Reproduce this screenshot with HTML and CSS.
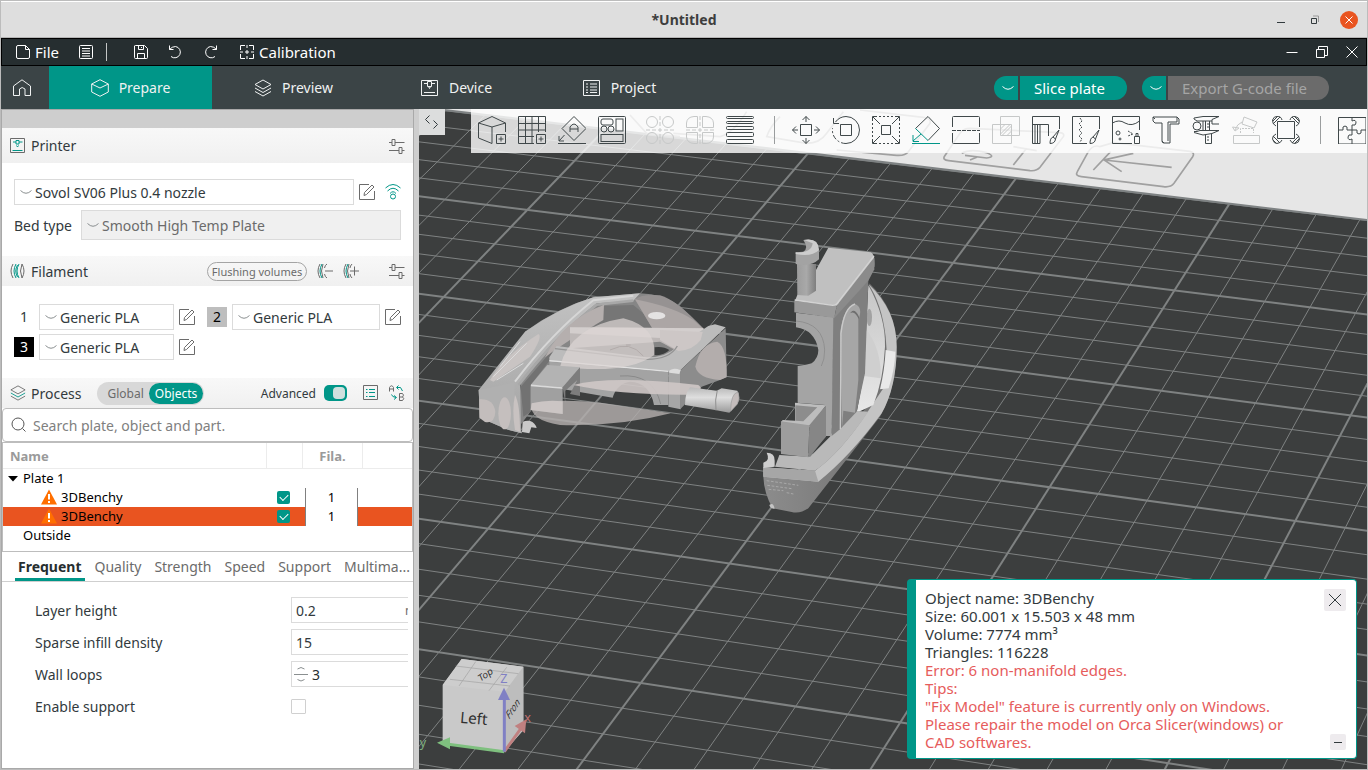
FILE: index.html
```html
<!DOCTYPE html>
<html lang="en">
<head>
    <meta charset="UTF-8">
    <title>*Untitled</title>
    <link rel="stylesheet" href="styles.css">
</head>
<body>
    <!-- shared icons -->
    <svg class="defs" width="0" height="0" aria-hidden="true">
        <symbol id="chevron" viewBox="0 0 12 12"><path d="M0.500 4.500Q6 10 11.500 4.500"/></symbol>
        <symbol id="edit" viewBox="0 0 16 16"><path d="M10 0.500H0.500V15.500H15.500V7M5 11.500L5.500 8.500L13 1L15 3L7.500 10.500Z"/></symbol>
        <symbol id="sliders" viewBox="0 0 16 16"><path d="M0 4.500H3M6 4.500H15.500M3 1.500H6V7.500H3ZM0 12.500H10M13 12.500H15.500M10 9.500H13V15.500H10Z"/></symbol>
        <symbol id="layers" viewBox="0 0 18 18"><path d="M9 1L17 5.500L9 10L1 5.500ZM1 9L9 13.500L17 9M1 12.500L9 17L17 12.500"/></symbol>
        <symbol id="warn" viewBox="0 0 16 16"><path d="M8 0.500L16 15.500H0Z" fill="#ff6f00" stroke="none"/><path d="M8 5V10.500M8 12V14" stroke="#fff" stroke-width="2"/></symbol>
    </svg>

    <div class="window">
        <header class="titlebar">
            <h1>*Untitled</h1>
            <div class="win-buttons">
                <button class="win-min" aria-label="Minimize"><svg width="10" height="10"><path d="M1 7.500H9"/></svg></button>
                <button aria-label="Restore"><svg width="10" height="10"><path d="M1.500 3.500H6.500V8.500H1.500Z"/><path d="M3 1H8.500V7" stroke="#999"/></svg></button>
                <button class="win-close" aria-label="Close"><svg width="10" height="10"><path d="M1.500 1.500L8.500 8.500M8.500 1.500L1.500 8.500"/></svg></button>
            </div>
        </header>

        <div class="menubar">
            <button class="menu-file"><svg width="14" height="14"><path d="M9.500 0.500H2Q0.500 0.500 0.500 2V12Q0.500 13.500 2 13.500H12Q13.500 13.500 13.500 12V4.500L9.500 0.500V4.500H13.500"/></svg>File</button>
            <button aria-label="Menu"><svg width="14" height="14"><path d="M0.500 1.500Q0.500 0.500 1.500 0.500H12.500Q13.500 0.500 13.500 1.500V12.500Q13.500 13.500 12.500 13.500H1.500Q0.500 13.500 0.500 12.500ZM3 3.500H11M3 6H11M3 8.500H11M3 11H11"/></svg></button>
            <span class="menu-line"></span>
            <button class="menu-save" aria-label="Save"><svg width="14" height="14"><path d="M0.500 1Q0.500 0.500 1.500 0.500H10.500L13.500 3.500V12.500Q13.500 13.500 12.500 13.500H1.500Q0.500 13.500 0.500 12.500ZM4.500 0.500V4.500H9.500V0.500M3.500 13.500V8.500H10.500V13.500M7.500 2V3"/></svg></button>
            <button class="menu-undo" aria-label="Undo"><svg width="14" height="14"><path d="M1.500 0.500V4.500H5.500M1.500 4.500Q4 1.500 7.500 1.500A5.700 5.700 0 1 1 3 11.500"/></svg></button>
            <button class="menu-redo" aria-label="Redo"><svg width="14" height="14"><path d="M12.500 0.500V4.500H8.500M12.500 4.500Q10 1.500 6.500 1.500A5.700 5.700 0 1 0 11 11.500"/></svg></button>
            <button class="menu-calib"><svg width="14" height="14"><path d="M0.500 5V0.500H5M9 0.500H13.500V5M13.500 9V13.500H9M5 13.500H0.500V9M7 0V3M7 11V14M0 7H3M11 7H14M7 5V9M5 7H9"/></svg>Calibration</button>
            <div class="menu-right">
                <button aria-label="Minimize"><svg width="12" height="12"><path d="M0.500 6.500H11.500"/></svg></button>
                <button aria-label="Restore"><svg width="12" height="12"><path d="M0.500 3.500H8.500V11.500H0.500ZM2.500 3V0.500H11.500V9.500H9"/></svg></button>
                <button aria-label="Close"><svg width="12" height="12"><path d="M0.500 0.500L11.500 11.500M11.500 0.500L0.500 11.500"/></svg></button>
            </div>
        </div>

        <nav class="tabbar">
            <a class="home" href="#" aria-label="Home"><svg width="18" height="18"><path d="M0.500 7L9 0.800L17.500 7V16.500H12V10Q9 7 6.500 10V16.500H0.500Z"/></svg></a>
            <a class="tab active" href="#"><svg width="18" height="18"><path d="M9 0.700L17.300 5V13L9 17.300L0.700 13V5ZM0.700 5L9 9L17.300 5"/></svg>Prepare</a>
            <a class="tab" href="#"><svg width="18" height="18"><use href="#layers"/></svg>Preview</a>
            <a class="tab" href="#"><svg width="18" height="18"><path d="M0.500 1.500H16.500V16.500H0.500ZM3 4.500H6.500M10.500 4.500H14M6.500 2.500H10.500V7.500H6.500ZM7.500 7.500L8.500 9.500L9.500 7.500M3 13.500H14"/></svg>Device</a>
            <a class="tab" href="#"><svg width="18" height="18"><path d="M0.500 1.500H16.500V16.500H0.500ZM3 5H5M7 5H14M3 8H5M7 8H14M3 11H5M7 11H14M3 13.500H5M7 13.500H14"/></svg>Project</a>
            <div class="slice-actions">
                <div class="split">
                    <button class="drop" aria-label="Slice options"><svg width="12" height="12"><use href="#chevron"/></svg></button>
                    <button class="main">Slice plate</button>
                </div>
                <div class="split">
                    <button class="drop" aria-label="Export options"><svg width="12" height="12"><use href="#chevron"/></svg></button>
                    <button class="main export" disabled>Export G-code file</button>
                </div>
            </div>
        </nav>

        <div class="workspace">
            <aside class="sidebar">
                <div class="strip"></div>
                <div class="section-head printer-head">
                    <svg width="16" height="16"><path d="M0.500 0.500H14.500V14.500H0.500Z"/><path class="teal" d="M3 4H6M9 4H12.500M6 2.500H9V6H6ZM6.500 7.500L7.500 9L8.500 7.500M2.500 12.500H12.500"/></svg>
                    <h2>Printer</h2>
                    <button class="push" aria-label="Printer settings"><svg width="16" height="16"><use href="#sliders"/></svg></button>
                </div>
                <div class="printer-body">
                    <div class="line">
                        <div class="combo"><svg width="12" height="12"><use href="#chevron"/></svg>
                            <select aria-label="Printer"><option>Sovol SV06 Plus 0.4 nozzle</option></select></div>
                        <button aria-label="Edit printer"><svg width="16" height="16"><use href="#edit"/></svg></button>
                        <button class="wifi" aria-label="Connection"><svg width="16" height="16"><path class="teal" d="M0.500 4Q8 -3 15.500 4M2.500 7Q8 1.500 13.500 7M5 9.500Q8 6 11 9.500"/><circle class="teal" cx="8" cy="12.500" r="2.500"/></svg></button>
                    </div>
                    <div class="line">
                        <label for="bed">Bed type</label>
                        <div class="combo off"><svg width="12" height="12"><use href="#chevron"/></svg>
                            <select id="bed" disabled><option>Smooth High Temp Plate</option></select></div>
                    </div>
                </div>

                <div class="section-head">
                    <svg width="16" height="16"><path d="M3 1Q-1 8 3 15M12 1Q9 8 12 15Q16 8 12 1"/><path class="teal" d="M6 1Q2 8 6 15M9 1Q5 8 9 15M7.500 2Q4 8 7.500 14"/></svg>
                    <h2>Filament</h2>
                    <button class="flush push">Flushing volumes</button>
                    <button aria-label="Remove filament"><svg width="16" height="16"><path d="M3 1Q-1 8 3 15M6 1Q3 8 6 15M10 1Q8 2 7.500 5M10 15Q8 14 7.500 11M8 8H16"/><path class="teal" d="M5 1Q1 8 5 15"/></svg></button>
                    <button class="fil-add" aria-label="Add filament"><svg width="16" height="16"><path d="M3 1Q-1 8 3 15M6 1Q3 8 6 15M9 1Q7 3 7 5M9 15Q7 13 7 11M7 8H16M11.500 3.500V12.500"/><path class="teal" d="M5 1Q1 8 5 15"/></svg></button>
                    <button class="fil-set" aria-label="Filament settings"><svg width="16" height="16"><use href="#sliders"/></svg></button>
                </div>
                <div class="filaments">
                    <div class="fil">
                        <span class="chip">1</span>
                        <div class="combo"><svg width="12" height="12"><use href="#chevron"/></svg>
                            <select aria-label="Filament 1"><option>Generic PLA</option></select></div>
                        <button aria-label="Edit filament 1"><svg width="16" height="16"><use href="#edit"/></svg></button>
                    </div>
                    <div class="fil">
                        <span class="chip grey">2</span>
                        <div class="combo"><svg width="12" height="12"><use href="#chevron"/></svg>
                            <select aria-label="Filament 2"><option>Generic PLA</option></select></div>
                        <button aria-label="Edit filament 2"><svg width="16" height="16"><use href="#edit"/></svg></button>
                    </div>
                    <div class="fil">
                        <span class="chip black">3</span>
                        <div class="combo"><svg width="12" height="12"><use href="#chevron"/></svg>
                            <select aria-label="Filament 3"><option>Generic PLA</option></select></div>
                        <button aria-label="Edit filament 3"><svg width="16" height="16"><use href="#edit"/></svg></button>
                    </div>
                </div>

                <div class="section-head">
                    <svg width="16" height="16" viewBox="0 0 18 18"><path d="M9 1L17 5.500L9 10L1 5.500ZM1 12.500L9 17L17 12.500"/><path class="teal" d="M1 9L9 13.500L17 9"/></svg>
                    <h2>Process</h2>
                    <div class="scope">
                        <button>Global</button>
                        <button class="on">Objects</button>
                    </div>
                    <label class="adv push" for="adv">Advanced</label>
                    <input class="toggle" id="adv" type="checkbox" checked>
                    <button class="list-btn" aria-label="Compare presets"><svg width="16" height="16"><path d="M0.500 0.500H14.500V14.500H0.500Z"/><path class="teal" d="M3 4.500H4.500M6 4.500H12M3 7.500H4.500M6 7.500H12M3 11.500H4.500M6 11.500H12"/></svg></button>
                    <button class="ab-btn" aria-label="Search and replace"><svg width="16" height="16"><path d="M0.500 6.500V2.500Q2.500 -1 4.500 2.500V6.500M0.500 4H4.500M10.500 8.500V15.500H13.500Q16 13.500 13.500 12H10.500M13.500 12Q15.500 10 13.500 8.500H10.500"/><path class="teal" d="M9.500 0.500L7.500 2.500L9.500 4.500M8 2.500H11.500L13.500 6M2.500 9.500Q3 12 7 12.500M5 10.500L7.500 12.500L5 14.500"/></svg></button>
                </div>

                <label class="search">
                    <svg width="16" height="16"><circle cx="7" cy="7" r="6"/><path d="M11.500 11.500L14.500 14.500"/></svg>
                    <input type="text" placeholder="Search plate, object and part." aria-label="Search">
                </label>

                <div class="tree">
                    <table>
                        <colgroup><col class="c-name"><col class="c-check"><col class="c-fila"><col></colgroup>
                        <thead>
                            <tr><th>Name</th><th></th><th>Fila.</th><th></th></tr>
                        </thead>
                        <tbody>
                            <tr><td class="plate"><svg width="10" height="6"><path d="M0 0H10L5 5.500Z"/></svg>Plate 1</td><td></td><td></td><td></td></tr>
                            <tr class="obj">
                                <td><svg width="16" height="16"><use href="#warn"/></svg>3DBenchy</td>
                                <td><input type="checkbox" checked aria-label="Printable"></td>
                                <td class="fila"><span>1</span></td><td></td>
                            </tr>
                            <tr class="obj selected">
                                <td><svg width="16" height="16"><use href="#warn"/></svg>3DBenchy</td>
                                <td><input type="checkbox" checked aria-label="Printable"></td>
                                <td class="fila"><span>1</span></td><td></td>
                            </tr>
                            <tr><td class="outside">Outside</td><td></td><td></td><td></td></tr>
                        </tbody>
                    </table>
                </div>

                <div class="param-tabs">
                    <button class="on">Frequent</button>
                    <button>Quality</button>
                    <button>Strength</button>
                    <button>Speed</button>
                    <button>Support</button>
                    <button>Multima...</button>
                </div>
                <div class="params">
                    <div class="param">
                        <label for="lh">Layer height</label>
                        <div class="field"><input id="lh" type="text" value="0.2"><span class="unit">mm</span></div>
                    </div>
                    <div class="param">
                        <label for="inf">Sparse infill density</label>
                        <div class="field"><input id="inf" type="text" value="15"></div>
                    </div>
                    <div class="param">
                        <label for="wl">Wall loops</label>
                        <div class="field spin">
                            <svg width="14" height="18"><path d="M3.500 4Q7 1 10.500 4M0 9.500H14M3.500 14.500Q7 17.500 10.500 14.500"/></svg>
                            <input id="wl" type="text" value="3"></div>
                    </div>
                    <div class="param">
                        <label for="sup">Enable support</label>
                        <input class="box" id="sup" type="checkbox">
                    </div>
                </div>
            </aside>

            <main class="canvas">
                <svg class="scene" viewBox="419 109 948 660" preserveAspectRatio="xMinYMin slice">
                    <defs>
                        <linearGradient id="g-hull" x1="0" y1="0" x2="0" y2="1"><stop offset="0" stop-color="#c2c2c2"/><stop offset="1" stop-color="#a4a4a4"/></linearGradient>
                        <linearGradient id="g-tube" x1="0" y1="0" x2="0" y2="1"><stop offset="0" stop-color="#b9b9b9"/><stop offset=".4" stop-color="#dedede"/><stop offset="1" stop-color="#9a9a9a"/></linearGradient>
                        <linearGradient id="g-pipe" x1="0" y1="0" x2="1" y2="0"><stop offset="0" stop-color="#9c9c9c"/><stop offset=".5" stop-color="#a9a9a9"/><stop offset="1" stop-color="#7e7e7e"/></linearGradient>
                        <linearGradient id="g-bow" x1="0" y1="0" x2="1" y2="0"><stop offset="0" stop-color="#8c8c8c"/><stop offset="1" stop-color="#6f6f6f"/></linearGradient>
                        <linearGradient id="g-in" x1="0" y1="0" x2="0" y2="1"><stop offset="0" stop-color="#c6c6c6"/><stop offset="1" stop-color="#e8e8e8"/></linearGradient>
                    </defs>
                    <rect x="419" y="109" width="948" height="660" fill="#3c3e3e"/>
                    <g id="grid"></g>
                    <path d="M436 109L740 145L1367 220V109Z" fill="#e6e6e6"/>
                    <path d="M436 109L740 145L1367 220" stroke="#7e8283" stroke-width="2" fill="none"/>

                    <!-- printed key symbols along the plate edge -->
                    <g class="keys" transform="translate(880 0) scale(.33333)">
                        <path d="M660 440Q640 432 625 455L592 515Q584 528 604 530L850 560Q872 563 882 550L938 470Q946 458 930 454L700 428Z"/>
                        <path d="M672 480L875 502M760 460L672 480L725 515M692 455L640 510"/>
                        <path d="M270 385Q250 385 240 400L194 468Q186 480 206 482L450 512Q470 514 480 502L550 410Q555 400 540 398Z"/>
                        <path d="M245 460Q270 445 320 458Q350 470 320 474L255 466M290 472L270 480M440 445L400 495M400 440L470 452"/>
                        <path d="M-130 450L50 466Q75 468 85 455L150 370Q155 355 130 352L-60 330M-300 350Q-330 380 -340 410L-220 430Q-180 430 -160 400L-110 335M-620 400L-480 410Q-440 400 -400 335M-750 345L-700 400L-600 410"/>
                    </g>

                    <!-- left model -->
                    <g transform="translate(460 270) scale(.33333)">
                        <path d="M195 185Q290 115 400 82L540 70Q610 72 660 108L735 180L700 260L300 300L200 440L170 480Z" fill="#868686"/>
                        <path d="M56 360L195 185Q300 112 400 82L540 70L520 92L410 100Q270 210 180 340L184 490L140 478L60 443Z" fill="url(#g-hull)"/>
                        <path d="M165 335Q275 190 400 91L520 77" stroke="#d6d6d6" stroke-width="6" fill="none"/>
                        <path d="M176 345Q286 202 410 104L520 92" stroke="#a8a8a8" stroke-width="8" fill="none"/>
                        <path d="M90 330Q130 260 235 192Q250 200 210 260L100 335Z" fill="#c9c4c3"/>
                        <path d="M100 320L200 220M110 330L190 280M120 290L180 215" stroke="#dcdcdc" stroke-width="3" fill="none"/>
                        <path d="M182 350L290 225L266 275L212 345V425L190 440Z" fill="#727272"/>
                        <path d="M420 108L520 105L610 180H400Z" fill="#767676"/>
                        <path d="M255 262Q310 150 432 104L430 150L330 210L285 240Z" fill="#b5afae"/>
                        <path d="M525 88Q545 72 600 76Q650 90 732 178Q720 244 655 243Q610 230 580 180Z" fill="#969292"/>
                        <path d="M525 88Q640 110 700 150L732 178Q720 244 655 243Q610 230 580 180Z" fill="#aca6a5"/>
                        <ellipse cx="590" cy="137" rx="26" ry="11" fill="#e4e2e2"/>
                        <path d="M330 172L730 175Q720 240 655 243L600 215L330 235Z" fill="#bdb8b7"/>
                        <path d="M330 172L730 175Q728 195 715 210L330 190Z" fill="#d3cecd"/>
                        <path d="M583 232Q610 228 628 240Q610 258 583 255Z" fill="#3c3e3e"/>
                        <path d="M268 262L290 228L560 262Q620 262 650 230L745 168L765 163L797 172L662 300L625 306L268 275Z" fill="#bcbcbc"/>
                        <path d="M600 210L655 243Q700 240 722 210L728 186L600 180Z" fill="#cdc7c6"/>
                        <path d="M285 236L560 268Q630 268 652 228" stroke="#949494" stroke-width="4" fill="none"/>
                        <path d="M268 275L625 305V405H582Q570 338 510 335Q470 342 458 383L268 350Z" fill="#a3a3a3"/>
                        <path d="M480 318Q580 310 602 402" stroke="#8a8a8a" stroke-width="3" fill="none"/>
                        <path d="M268 272L625 304" stroke="#e2e2e2" stroke-width="4"/>
                        <path d="M300 290Q330 170 490 145Q590 170 583 255Q500 315 300 290Z" fill="#ddd5d4" opacity=".7"/>
                        <path d="M450 240Q510 210 550 258M498 225H512" stroke="#b2abaa" stroke-width="3" fill="none"/>
                        <path d="M662 300L797 175L800 320L780 330L725 350L662 416Z" fill="#8c8c8c"/>
                        <path d="M706 290Q720 220 772 215Q802 230 800 322L780 330Q715 325 706 290Z" fill="#b3adac"/>
                        <path d="M625 303Q640 292 662 300V418L625 410Z" fill="#a6a6a6"/>
                        <path d="M627 302Q640 292 662 300L658 312L628 308Z" fill="#dcdcdc"/>
                        <path d="M212 345L262 285L360 292L308 352Z" fill="#b3b3b3"/>
                        <path d="M212 345L308 352V432L212 420Z" fill="#a0a0a0"/>
                        <path d="M308 352L360 292V378L330 372L352 330L316 362V400Z" fill="#7d7d7d"/>
                        <path d="M213 346L306 354" stroke="#dadada" stroke-width="5"/>
                        <path d="M215 400Q300 385 420 398L632 430Q480 470 300 465Q205 450 215 400Z" fill="#b5b0af" opacity=".8"/>
                        <path d="M215 400Q260 388 308 394V432L212 420Z" fill="#cbc5c4"/>
                        <path d="M340 345Q450 315 715 345Q740 362 680 374Q480 375 340 345Z" fill="#cfc8c7" opacity=".9"/>
                        <path d="M56 360Q110 350 165 335Q158 420 186 490L140 478L60 443Z" fill="#b0b0b0"/>
                        <path d="M58 388Q100 385 106 425Q104 462 75 456L58 443Z" fill="#c3bdbc"/>
                        <ellipse cx="134" cy="430" rx="19" ry="48" fill="#c5bfbe"/>
                        <path d="M165 375Q180 400 180 485L165 480Q155 420 165 375Z" fill="#c8c2c1"/>
                        <path d="M188 455Q215 445 228 468L230 474L214 472L208 490L186 486Z" fill="#c9c9c9"/>
                        <path d="M690 352L770 362L785 355L832 362Q842 380 832 402L808 428L765 420L675 405Q675 370 690 352Z" fill="url(#g-tube)"/>
                        <path d="M772 360Q764 390 768 421" stroke="#8f8f8f" stroke-width="3" fill="none"/>
                        <path d="M812 424Q812 370 834 366Q842 385 832 402Z" fill="#c3bcbb" stroke="#9a9a9a" stroke-width="2"/>
                    </g>

                    <!-- right model -->
                    <g transform="translate(740 220) scale(.33333)">
                        <path d="M388 190Q470 270 470 380Q470 500 420 590L205 865Q180 882 155 876L98 865Q72 820 70 770L225 755L380 560Z" fill="url(#g-bow)"/>
                        <path d="M70 742L225 752Q300 700 380 580L430 505Q445 420 437 350Q425 250 385 192Q470 270 470 380Q470 500 425 580Q330 710 235 785L70 770Z" fill="#c4c4c4"/>
                        <path d="M437 390L466 395Q464 450 446 505L420 508Q434 450 437 390Z" fill="#e9e9e9"/>
                        <path d="M235 785L70 770V742L225 752Z" fill="#a6a6a6"/>
                        <path d="M385 195Q437 290 435 380Q430 480 400 555L350 578L372 460Z" fill="url(#g-in)"/>
                        <path d="M380 330Q425 390 422 475L372 468Z" fill="#cfcfcf"/>
                        <ellipse cx="388" cy="292" rx="8" ry="26" fill="#a2a2a2"/>
                        <path d="M118 705L210 710L270 650L310 570L385 575Q300 700 225 752L105 740Z" fill="#b9b9b9"/>
                        <path d="M278 292L385 180L375 460L350 575L300 628L275 648Z" fill="#7f7f7f"/>
                        <path d="M306 625L300 340Q310 262 345 252Q370 262 355 300V480L345 578L310 572Z" fill="#a6a6a6"/>
                        <path d="M357 290Q340 255 325 290L330 280Q345 270 357 300Z" fill="#6f6f6f"/>
                        <path d="M301 628L303 340Q312 262 345 252" stroke="#c9c9c9" stroke-width="4" fill="none"/>
                        <path d="M168 278L280 292L275 648H255V555L173 548V438Q200 435 215 430Q235 415 235 390Q225 330 168 322Z" fill="#a4a4a4"/>
                        <path d="M168 303Q250 310 254 390Q254 420 244 438" stroke="#909090" stroke-width="3" fill="none"/>
                        <path d="M265 83L392 97Q405 100 403 140L290 258L165 242L172 225L228 190V150Z" fill="#c0c0c0"/>
                        <path d="M163 242L290 257L283 294L163 277Z" fill="#999"/>
                        <path d="M290 257L403 112V148L385 182L283 294Z" fill="#8b8b8b"/>
                        <path d="M164 240L278 256Q290 256 296 244L402 108" stroke="#d3d3d3" stroke-width="4" fill="none"/>
                        <path d="M171 132L228 132V212L205 227L172 225Z" fill="url(#g-pipe)"/>
                        <path d="M167 97L190 95Q207 85 190 60Q235 52 237 90V118Q212 142 167 132Z" fill="#a3a3a3"/>
                        <path d="M167 97Q215 100 218 70L192 60Q235 52 237 90Q215 112 167 102Z" fill="#cdcdcd"/>
                        <path d="M165 548L258 556L210 622L123 606L128 600L165 602Z" fill="#bdbdbd"/>
                        <path d="M166 556L232 562L190 604L166 602Z" fill="#8d8d8d"/>
                        <path d="M123 604L208 616L205 712L123 702Z" fill="#9d9d9d"/>
                        <path d="M208 616L258 556V650L205 712Z" fill="#868686"/>
                        <path d="M80 698Q105 698 104 722V740L70 744V728Q92 722 80 698Z" fill="#cfcfcf"/>
                        <path d="M88 855Q100 845 104 866Q90 866 88 855Z" fill="#c4c4c4"/>
                        <path d="M80 782L175 796M82 796L155 806M86 808L130 812M140 818L160 822" stroke="#a9a9a9" stroke-width="3" stroke-dasharray="8 5" fill="none"/>
                    </g>

                    <!-- view cube -->
                    <g class="cube" transform="translate(415 630) scale(.33333)">
                        <path d="M83 165L140 87L325 110V300L268 365L83 340Z" fill="#c9c9c9"/>
                        <path d="M83 165L140 87L325 110L270 185Z" fill="#cdcdcd"/>
                        <path d="M270 185L325 110V300L268 365Z" fill="#bdbdbd"/>
                        <path d="M122 108L310 131M105 148L285 168M182 95L132 168M275 112L222 182" stroke="#a2a2a2" stroke-width="2"/>
                        <text class="face" transform="translate(134 278) rotate(5)">Left</text>
                        <text class="face small" transform="translate(196 156) rotate(-34) skewX(-10)">Top</text>
                        <text class="face small" transform="translate(282 270) rotate(-56) skewX(-30)">Fron</text>
                        <path d="M268 365L100 343" stroke="#7fc07f" stroke-width="9"/>
                        <path d="M66 338L105 322V358Z" fill="#7fc07f"/>
                        <path d="M268 365L318 295" stroke="#c08080" stroke-width="9"/>
                        <path d="M334 268L299 288L330 310Z" fill="#c08080"/>
                        <path d="M268 365V205" stroke="#8080c4" stroke-width="9"/>
                        <path d="M267 173L249 210H285Z" fill="#8080c4"/>
                        <text class="axis" x="256" y="158" fill="#8080c4">Z</text>
                        <text class="axis" x="328" y="276" fill="#c07070">x</text>
                        <text class="axis" x="14" y="350" fill="#7fb07f">y</text>
                    </g>
                </svg>

                <button class="collapse" aria-label="Collapse sidebar"><svg width="16" height="16"><path d="M5.500 1.500L1.500 5.500L5.500 9.500M9.500 6.500L13.500 10.500L9.500 14.500"/></svg></button>

                <div class="tools">
                    <button aria-label="Add"><svg><path d="M0.500 7L14 0.500L27.500 7V16M0.500 7V22L14 27.500V11L0.500 7M14 11L27.500 7M18.500 18.500H27.500V27.500H18.500ZM23 20.500V25.500M20.500 23H25.500"/></svg></button>
                    <button aria-label="Add plate"><svg><path d="M16 27.500H0.500V0.500H27.500V16M0.500 7.500H27.500M0.500 14H27.500M0.500 20.500H16M7.500 0.500V27.500M14 0.500V27.500M20.500 0.500V16M18.500 18.500H27.500V27.500H18.500ZM23 20.500V25.500M20.500 23H25.500"/></svg></button>
                    <button aria-label="Auto orient"><svg><path d="M16 0.500L28 12.500L16 24.500L4 12.500ZM12 16V11Q16 5 20 11V16M12 13H20M6.500 19L1 25M1 20V25H6M0 27.500H28"/></svg></button>
                    <button aria-label="Arrange"><svg><rect x=".5" y=".5" width="27" height="27" rx="1"/><rect x="3" y="3" width="12" height="6" rx="2"/><rect x="18" y="3" width="7" height="12"/><circle cx="6" cy="13" r="3"/><circle cx="13" cy="13" r="3"/><rect x="3" y="18.500" width="22" height="7"/></svg></button>
                    <button class="faint group" aria-label="Split to objects" disabled><svg><circle cx="6" cy="6" r="5.500"/><circle cx="22" cy="6" r="5.500"/><circle cx="6" cy="22" r="5.500"/><circle cx="22" cy="22" r="5.500"/><path d="M14 0V28M0 14H28" stroke-dasharray="4 2"/></svg></button>
                    <button class="faint" aria-label="Split to parts" disabled><svg><path d="M11.500 0.500V11.500H0.500V7Q1 1 8 0.500ZM16.500 0.500V11.500H27.500V7Q27 1 20 0.500ZM11.500 27.500V16.500H0.500V21Q1 27 8 27.500ZM16.500 27.500V16.500H27.500V21Q27 27 20 27.500Z"/><path d="M14 0V28M0 14H28" stroke-dasharray="4 2"/></svg></button>
                    <button aria-label="Variable layer height"><svg><rect x=".5" y=".5" width="27" height="2" rx="1"/><rect x=".5" y="5.500" width="27" height="2" rx="1"/><rect x=".5" y="10.500" width="27" height="3" rx="1"/><rect x=".5" y="16.500" width="27" height="4" rx="1"/><rect x=".5" y="23.500" width="27" height="4" rx="1"/></svg></button>
                    <span class="tool-line"></span>
                    <button aria-label="Move"><svg><path d="M8.500 8.500H19.500V19.500H8.500ZM14 6V0.500M10.500 4L14 0.500L17.500 4M14 22V27.500M10.500 24L14 27.500L17.500 24M6 14H0.500M4 10.500L0.500 14L4 17.500M22 14H27.500M24 10.500L27.500 14L24 17.500"/></svg></button>
                    <button aria-label="Rotate"><svg><path d="M8.500 8.500H19.500V19.500H8.500ZM3.500 6A13.500 13.500 0 0 1 14 0.500A13.500 13.500 0 0 1 14 27.500M1.500 2V7.500H7"/><path d="M14 27.500A13.500 13.500 0 0 1 0.500 12" stroke-dasharray="5 2 2 2"/></svg></button>
                    <button aria-label="Scale"><svg><path d="M9.500 9.500H18.500V18.500H9.500ZM1 1L8 8M27 1L20 8M1 27L8 20M27 27L20 20M0.500 5V0.500H5M23 0.500H27.500V5M27.500 23V27.500H23M5 27.500H0.500V23"/><path d="M7 0.500H22M7 27.500H22M0.500 7V22M27.500 7V22" stroke-dasharray="2 2"/></svg></button>
                    <button aria-label="Lay on face"><svg><path d="M3.500 12.500L16 0.500L27.500 12.500L16 24.500"/><path class="teal" d="M3.500 12.500L16 24.500M9 18L1 25M1 19V25.500H7M0 27.500H28"/></svg></button>
                    <button aria-label="Cut"><svg><path d="M0.500 11V1.500Q0.500 0.500 1.500 0.500H26.500Q27.500 0.500 27.500 1.500V11M0.500 17V26.500Q0.500 27.500 1.500 27.500H26.500Q27.500 27.500 27.500 26.500V17"/><path d="M0 14.500H28" stroke-dasharray="4 1"/></svg></button>
                    <button class="faint" aria-label="Mesh boolean" disabled><svg><path d="M8.500 0.500H27.500V19.500H8.500ZM0.500 8.500H19.500V27.500H0.500ZM8.500 13L13 8.500M8.500 18L18 8.500M10 19.500L19.500 10M15 19.500L19.500 15"/></svg></button>
                    <button aria-label="Support painting"><svg><path d="M0.500 27.500V0.500H27.500V13M0.500 8.500H16.500V20M3 9V27.500M5.500 9V27.500M8 9V27.500M0.500 27.500H8M27 14L21 21L23.500 23ZM21 21Q18 22 18 27.500Q23 27.500 23.500 23"/></svg></button>
                    <button aria-label="Seam painting"><svg><path d="M15 27.500H0.500V0.500H27.500V13M27 14L21 21L23.500 23ZM21 21Q18 22 18 27.500Q23 27.500 23.500 23"/><path d="M8 2L10 5L7 8L10 11L7 14L10 17L7 20L10 23L8 26" stroke-dasharray="2 1"/></svg></button>
                    <button aria-label="Fuzzy skin"><svg><path d="M20 27.500H0.500V0.500H27.500V14M0.500 7Q7 3 13 7Q20 11 27.500 5M22.500 20.500H27.500V27.500H22.500ZM24 20V17.500H26V20"/><circle cx="6" cy="17" r="2"/><circle cx="8" cy="23" r="1"/><path d="M16 15L21 18L16 20" stroke-dasharray="2 1"/></svg></button>
                    <button aria-label="Text"><svg><path d="M1 1H25L27 3V8H18V27H12Q10 27 10 25V7H3L1 5ZM1 1L3 3M25 1V6H16V25M10 25L12 27"/></svg></button>
                    <button aria-label="Measure"><svg><path d="M2 2L11 0.500H27L20 3.500V5H5L2 3ZM11 5V14M2 15.500H5L8 14.500H27L20 17.500L11 19L2 16.500M20 5V8H27M13.500 5V14.500M17.500 5V14.500M13.500 18.500V27.500H19.500V18M15 8H17M15 11H17M15 21H17M15 24H17"/><circle cx="5" cy="10" r="4"/></svg></button>
                    <button class="faint" aria-label="Assemble" disabled><svg><path d="M12 1L25 6L22 12L10 8ZM1.500 19.500H27.500V27.500H1.500ZM10 6Q5 8 3 14M0.500 11L3 15L7 12Z"/><path d="M8.500 17V12.500H21.500V17" stroke-dasharray="2 1"/></svg></button>
                    <button aria-label="Brim ears"><svg><path d="M5.500 5.500H22.500V22.500H5.500ZM4 10Q0 8 0.500 4Q2 0 5 0.500Q9 0 10 4M18 4Q19 0 23 0.500Q27 1 27.500 5Q27 9 24 10M4 18Q0 20 0.500 23Q2 28 5 27.500Q9 27 10 24M18 24Q20 28 23 27.500Q27 27 27.500 23Q27 19 24 18M1 8L8 1M1 5L5 1M20 1L27 8M23 1L27 5M1 20L8 27M1 24L4 27M20 27L27 20M23 27L27 23"/></svg></button>
                    <span class="tool-line"></span>
                    <button aria-label="Assembly view"><svg><path d="M0.500 1.500H28V28H0.500ZM14 1.500V5Q18 3 18 7Q18 10 14 9V14M0.500 14H5Q4 10 7 10Q10 10 9 14H19Q18 18 21 18Q24 18 23 14H28M14 14V19Q10 18 10 21Q10 25 14 23V28"/></svg></button>
                </div>

                <div class="notice">
                    <div class="notice-text">
                        <p>Object name: 3DBenchy</p>
                        <p>Size: 60.001 x 15.503 x 48 mm</p>
                        <p>Volume: 7774 mm³</p>
                        <p>Triangles: 116228</p>
                        <p class="err">Error: 6 non-manifold edges.</p>
                        <p class="err">Tips:</p>
                        <p class="err">"Fix Model" feature is currently only on Windows.</p>
                        <p class="err">Please repair the model on Orca Slicer(windows) or</p>
                        <p class="err">CAD softwares.</p>
                    </div>
                    <div class="notice-side">
                        <button class="n-close" aria-label="Close"><svg width="14" height="14"><path d="M1 1L13 13M13 1L1 13"/></svg></button>
                        <button class="n-min" aria-label="Minimize"><svg width="10" height="10"><path d="M1 5.500H9"/></svg></button>
                    </div>
                </div>
            </main>
        </div>
    </div>
    <script src="grid.js"></script>
</body>
</html>
```
FILE: grid.js
```js
// Draws the build plate grid: 10mm lines, every fifth one thicker.
const grid = document.getElementById("grid");

// screen corners of a plate patch, 2 x 5 major cells
const p00 = [808, 153.4], p10 = [1229.5, 203.6], p01 = [389.3, 644.6], p11 = [900.3, 722.4];
const g = -0.02456, h = -0.191;

const project = (col, row) => {
    const u = col / 10, v = row / 25, w = 1 + g * u + h * v;
    return [0, 1].map((i) =>
        ((p00[i] + u * (p10[i] * (1 + g) - p00[i]) + v * (p01[i] * (1 + h) - p00[i])) / w).toFixed(1)
    );
};

const addLine = (a, b, major) => {
    const line = document.createElementNS("http://www.w3.org/2000/svg", "path");
    line.setAttribute("d", `M${a}L${b}`);
    line.setAttribute("class", major ? "major" : "minor");
    grid.appendChild(line);
};

for (let col = -20; col <= 40; col++) {
    addLine(project(col, 0), project(col, 45), col % 5 === 0);
}
for (let row = 0; row <= 45; row++) {
    addLine(project(-20, row), project(40, row), row % 5 === 0);
}
```
FILE: styles.css
```css
* {
    box-sizing: border-box;
}
body {
    margin: 0;
    font-family: "Noto Sans", "Open Sans", sans-serif;
    font-size: 14px;
    color: #323a3d;
}
h1, h2, p {
    margin: 0;
    font-weight: normal;
}
button, input, select {
    font: inherit;
    color: inherit;
    margin: 0;
    padding: 0;
    border: 0;
    background: none;
}
button {
    display: flex;
    align-items: center;
    justify-content: center;
}
svg {
    display: block;
    flex: none;
    fill: none;
    stroke: currentColor;
}
.defs {
    position: absolute;
}
.teal {
    stroke: #009688;
}
.window {
    display: flex;
    flex-direction: column;
    height: 100vh;
    border: 1px solid #bcbcbc;
    overflow: hidden;
}

/* title bar */
.titlebar {
    display: grid;
    grid-template-columns: 1fr auto 1fr;
    align-items: center;
    height: 37px;
    flex: none;
    background: #dedede;
    border-top: 1px solid #fff;
    border-bottom: 1px solid #b4b4b4;
}
.titlebar h1 {
    grid-column: 2;
    font-size: 14px;
    font-weight: bold;
    color: #3d3d3d;
}
.win-buttons {
    display: flex;
    justify-content: flex-end;
    align-items: center;
    gap: 20px;
    padding-right: 9px;
}
.win-min {
    margin-right: 4px;
}
.win-close {
    width: 18px;
    height: 18px;
    border-radius: 50%;
    background: #e95420;
    color: #fff;
}

/* menu bar */
.menubar {
    display: flex;
    align-items: center;
    height: 28px;
    flex: none;
    padding-left: 14px;
    background: #262e30;
    border: 1px solid #000;
    color: #fff;
    font-size: 15px;
}
.menubar button {
    gap: 5px;
}
.menu-file {
    margin-right: 20px;
}
.menu-line {
    width: 1px;
    height: 18px;
    margin-left: 13px;
    background: #c4c6c6;
}
.menu-save {
    margin-left: 27px;
}
.menu-undo {
    margin-left: 20px;
}
.menu-redo, .menu-calib {
    margin-left: 22px;
}
.menu-right {
    display: flex;
    gap: 18px;
    margin-left: auto;
    padding-right: 8px;
}

/* main tabs */
.tabbar {
    display: flex;
    height: 43px;
    flex: none;
    background: #3b4446;
    color: #fff;
}
.tabbar a {
    display: flex;
    align-items: center;
    justify-content: center;
    gap: 10px;
    color: #f0f2f2;
    text-decoration: none;
}
.home {
    width: 48px;
    padding-right: 7px;
}
.tab {
    width: 163px;
}
.tab.active {
    background: #009688;
}
.slice-actions {
    display: flex;
    align-items: center;
    gap: 15px;
    margin-left: auto;
    padding-right: 38px;
}
.split {
    display: flex;
    gap: 2px;
}
.split button {
    height: 24px;
    background: #009688;
}
.split .drop {
    width: 24px;
    padding-left: 4px;
    border-radius: 12px 0 0 12px;
}
.split .main {
    padding: 0 22px 0 14px;
    border-radius: 0 12px 12px 0;
    font-size: 15px;
}
.split .export {
    background: #6b6b6b;
    color: #a5a5a5;
}

/* sidebar */
.workspace {
    display: flex;
    flex: 1;
    min-height: 0;
    background: #cecece;
}
.sidebar {
    display: flex;
    flex-direction: column;
    width: 413px;
    flex: none;
    background: #fff;
    border: 1px solid #a9a9a9;
}
.strip {
    height: 18px;
    background: #cecece;
}
.section-head {
    display: flex;
    align-items: center;
    height: 30px;
    flex: none;
    padding: 0 8px;
    background: linear-gradient(#f8f8f8, #f0f0f0);
    color: #6b6b6b;
}
.section-head h2 {
    margin-left: 5px;
    font-size: 14px;
    color: #323a3d;
}
.section-head .push {
    margin-left: auto;
}
.printer-head {
    height: 35px;
}
.printer-body {
    padding: 16px 11px 16px 12px;
}
.line {
    display: flex;
    align-items: center;
}
.line + .line {
    margin-top: 5px;
}
.line > button {
    margin-left: 5px;
    color: #6b6b6b;
}
.line > .wifi {
    margin-left: 10px;
    margin-right: 1px;
}
.line .off {
    height: 30px;
    margin-left: 9px;
    margin-right: 1px;
    background: #f0f0f0;
    color: #6b6b6b;
}
.combo {
    display: flex;
    align-items: center;
    flex: 1;
    min-width: 0;
    height: 26px;
    padding-left: 5px;
    border: 1px solid #dbdbdb;
    background: #fff;
}
.combo svg {
    color: #8a8f90;
}
.combo select {
    appearance: none;
    flex: 1;
    min-width: 0;
    margin-left: 3px;
    opacity: 1;
}
.flush {
    height: 19px;
    width: 100px;
    border: 1px solid #a4a4a4;
    border-radius: 10px;
    font-size: 11px;
}
.flush + button {
    margin-left: 10px;
}
.fil-add {
    margin-left: 10px;
}
.fil-set {
    margin-left: 30px;
}
.filaments {
    display: grid;
    grid-template-columns: 181fr 194fr;
    gap: 4px 12px;
    padding: 18px 12px;
}
.fil {
    display: flex;
    align-items: center;
    gap: 5px;
}
.fil button {
    color: #6b6b6b;
}
.chip {
    width: 20px;
    line-height: 20px;
    text-align: center;
}
.chip.grey {
    background: #bebebe;
    color: #000;
}
.chip.black {
    background: #000;
    color: #fff;
}
.scope {
    display: flex;
    margin-left: 16px;
    padding: 1px;
    border-radius: 12px;
    background: #d8d8d8;
    font-size: 12px;
}
.scope button {
    height: 21px;
    padding: 0 5px 0 9px;
}
.scope .on {
    padding: 0 6px;
    border-radius: 11px;
    background: #009688;
    color: #fff;
}
.adv {
    font-size: 12px;
    color: #323a3d;
}
.toggle {
    appearance: none;
    display: flex;
    justify-content: flex-end;
    width: 23px;
    height: 16px;
    margin-left: 8px;
    padding: 2px;
    border-radius: 5px;
    background: #009688;
}
.toggle::before {
    content: "";
    width: 12px;
    height: 12px;
    border-radius: 4px;
    background: #cfe0de;
}
.list-btn {
    margin-left: 16px;
}
.ab-btn {
    margin-left: 10px;
}
.search {
    display: flex;
    align-items: center;
    gap: 6px;
    height: 34px;
    flex: none;
    padding: 0 8px;
    border: 1px solid #bdbdbd;
    border-radius: 4px;
    color: #555;
}
.search input {
    flex: 1;
    outline: none;
}
.search input::placeholder {
    color: #808080;
    opacity: 1;
}

/* object list */
.tree {
    height: 110px;
    flex: none;
    border: 1px solid #bdbdbd;
    color: #000;
    font-size: 13px;
}
.tree table {
    width: 100%;
    table-layout: fixed;
    border-collapse: separate;
    border-spacing: 0;
}
.c-name {
    width: 264px;
}
.c-check {
    width: 36px;
}
.c-fila {
    width: 60px;
}
.tree th {
    height: 26px;
    padding: 0 0 0 7px;
    border-right: 1px solid #ececec;
    border-bottom: 1px solid #ececec;
    text-align: left;
    color: #9a9a9a;
}
.tree th:nth-child(3) {
    padding: 0;
    text-align: center;
}
.tree th:last-child {
    border-right: 0;
}
.tree td {
    height: 19px;
    padding: 0;
    line-height: 19px;
    white-space: nowrap;
}
.tree td svg {
    display: inline-block;
    vertical-align: -3px;
    margin-right: 4px;
    stroke: none;
}
.tree .plate svg {
    fill: #000;
    margin: 0 5px 0 5px;
    vertical-align: 1px;
}
.tree .obj td:first-child {
    padding-left: 38px;
}
.tree .outside {
    padding-left: 20px;
}
.tree .selected td {
    background: #e95420;
}
.tree input {
    appearance: none;
    display: block;
    width: 13px;
    height: 13px;
    margin-left: 10px;
    border-radius: 2px;
    background: #009688;
}
.tree input::before {
    content: "";
    display: block;
    width: 7px;
    height: 4px;
    margin: 3px;
    border: solid #fff;
    border-width: 0 0 1px 1px;
    transform: rotate(-45deg);
}
.tree .fila span {
    display: block;
    width: 53px;
    margin-left: 2px;
    border: solid #808080;
    border-width: 0 1px;
    background: #fff;
    text-align: center;
}

/* parameters */
.param-tabs {
    display: flex;
    gap: 7px;
    height: 30px;
    flex: none;
    padding-left: 13px;
    border-bottom: 1px solid #cfcfcf;
    color: #6b6b6b;
}
.param-tabs button {
    padding: 2px 3px 0;
    border-bottom: 3px solid transparent;
    white-space: nowrap;
}
.param-tabs .on {
    border-bottom-color: #009688;
    font-weight: bold;
    color: #262e30;
}
.params {
    display: grid;
    gap: 6px;
    margin-right: 5px;
    padding: 15px 0 0 33px;
    overflow: hidden;
}
.param {
    display: grid;
    grid-template-columns: 256px 1fr;
    align-items: center;
    height: 26px;
}
.field {
    display: flex;
    align-items: center;
    width: 140px;
    height: 26px;
    padding-left: 4px;
    border: 1px solid #dbdbdb;
}
.field input {
    width: 109px;
    outline: none;
}
.field .unit {
    flex: none;
    font-size: 12px;
    color: #6b6b6b;
}
.spin {
    padding-left: 2px;
    color: #8a8f90;
}
.spin svg {
    margin-right: 4px;
}
.spin input {
    color: #262e30;
}
.box {
    appearance: none;
    width: 15px;
    height: 15px;
    border: 1px solid #d0d0d0;
    border-radius: 1px;
}

/* 3D view */
.canvas {
    position: relative;
    flex: 1;
    min-width: 0;
    margin-left: 5px;
    overflow: hidden;
    background: #3c3e3e;
}
.scene {
    width: 100%;
    height: 100%;
    stroke: none;
}
.minor {
    stroke: #7f8282;
    stroke-width: 1;
}
.major {
    stroke: #7f8282;
    stroke-width: 2;
}
.keys path {
    fill: none;
    stroke: #a0a0a0;
    stroke-width: 5;
}
.face {
    font-size: 46px;
    fill: #303030;
}
.face.small {
    font-size: 28px;
}
.axis {
    font-size: 38px;
}
.collapse {
    position: absolute;
    top: 0;
    left: 0;
    width: 26px;
    height: 26px;
    background: #dcdddd;
}
.tools {
    position: absolute;
    top: 0;
    left: 52px;
    right: 0;
    display: flex;
    gap: 12px;
    padding: 7px 0 9px 7px;
    overflow: hidden;
    background: rgba(255, 255, 255, .8);
    color: #40484a;
}
.tools button {
    flex: none;
}
.tools svg {
    width: 28px;
    height: 28px;
}
.tools .faint {
    color: #c6c8c8;
}
.tools .group {
    margin-left: 8px;
}
.tool-line {
    flex: none;
    width: 1px;
    margin: 0 5px 0 8px;
    background: #9a9d9e;
}
.notice {
    position: absolute;
    right: 10px;
    bottom: 10px;
    display: flex;
    width: 450px;
    height: 180px;
    padding: 9px 10px 8px 9px;
    border: 1px solid #009688;
    border-left-width: 9px;
    border-radius: 4px;
    background: #fff;
}
.notice-text {
    flex: 1;
    font-size: 15px;
    line-height: 18px;
}
.notice .err {
    color: #e65c5c;
}
.notice-side {
    display: flex;
    flex-direction: column;
    justify-content: space-between;
    align-items: flex-end;
}
.notice-side button {
    border-radius: 2px;
    background: #eeebee;
}
.n-close {
    width: 22px;
    height: 22px;
}
.n-min {
    width: 16px;
    height: 16px;
}
```
